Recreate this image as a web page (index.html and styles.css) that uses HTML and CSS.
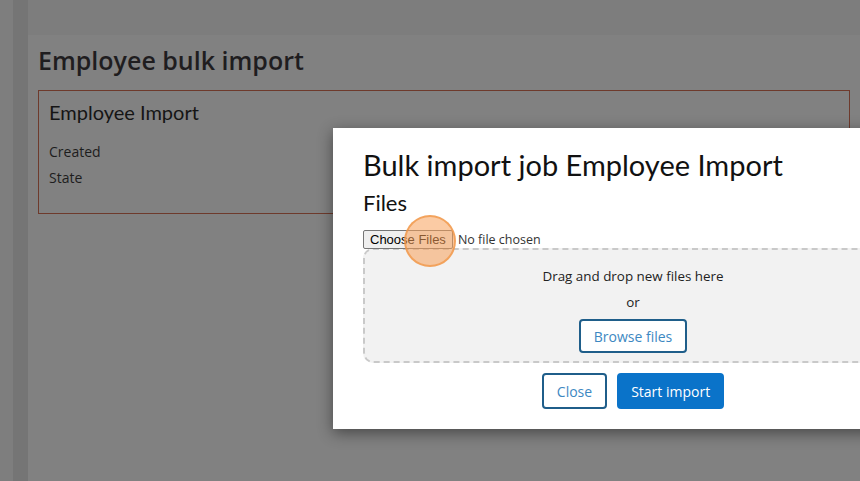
FILE: index.html
```html
<!DOCTYPE html>
<html lang="en">
<head>
<meta charset="utf-8">
<title>Employee bulk import</title>
<link rel="stylesheet" href="styles.css">
</head>
<body>
<div class="shell">
  <div class="rail-outer"></div>
  <div class="rail-inner"></div>
  <main class="content">
    <section class="panel">
      <h1 class="page-title">Employee bulk import</h1>
      <div class="job-card">
        <h2 class="job-title">Employee Import</h2>
        <div class="job-field">Created</div>
        <div class="job-field">State</div>
      </div>
    </section>
  </main>
</div>

<div class="modal">
  <h2 class="modal-title">Bulk import job Employee Import</h2>
  <h3 class="modal-sub">Files</h3>
  <div class="file-row">
    <span class="file-btn">Choose Files</span>
    <span class="file-none">No file chosen</span>
  </div>
  <div class="dropzone">
    <div class="dz-text">Drag and drop new files here</div>
    <div class="dz-or">or</div>
    <button class="btn btn-outline btn-browse">Browse files</button>
  </div>
  <div class="actions">
    <button class="btn btn-outline">Close</button>
    <button class="btn btn-primary">Start import</button>
  </div>
</div>
<div class="click-marker"></div>
</body>
</html>
```

FILE: styles.css
```css
html, body {
  margin: 0;
  padding: 0;
  height: 100%;
  overflow: hidden;
}
body {
  background: #7d7d7d;
  font-family: "Open Sans", "Liberation Sans", sans-serif;
  color: #1a1a1a;
}
.shell {
  display: flex;
  height: 100%;
}
.rail-outer {
  width: 13px;
  background: #7e7e7e;
}
.rail-inner {
  width: 15px;
  background: #757575;
}
.content {
  flex: 1;
  padding-top: 35px;
  display: flex;
  flex-direction: column;
}
.panel {
  flex: 1;
  background: #818181;
  padding: 9px 10px 0 10px;
}
.page-title {
  margin: 0 0 14px 0;
  font-size: 25px;
  font-weight: 600;
  line-height: 32px;
  color: #1f1d1f;
}
.job-card {
  border: 1px solid #6e3a2c;
  padding: 6px 10px 16px 10px;
  height: 100px;
}
.job-title {
  margin: 0 0 12px 0;
  font-family: Lato, "Open Sans", sans-serif;
  font-weight: 400;
  font-size: 20px;
  line-height: 30px;
  color: #151515;
}
.job-field {
  font-size: 14px;
  line-height: 26px;
  color: #1d1d1d;
}

.modal {
  position: absolute;
  left: 333px;
  top: 128px;
  width: 600px;
  box-sizing: border-box;
  background: #ffffff;
  padding: 19px 30px 20px 30px;
  box-shadow: 0 4px 14px rgba(0, 0, 0, 0.45);
}
.modal-title {
  margin: 0;
  font-family: Lato, "Open Sans", sans-serif;
  font-weight: 400;
  font-size: 29px;
  line-height: 36px;
  color: #111;
}
.modal-sub {
  margin: 6px 0 13px 0;
  font-family: Lato, "Open Sans", sans-serif;
  font-weight: 400;
  font-size: 22px;
  line-height: 28px;
  color: #111;
}
.file-row {
  display: flex;
  align-items: center;
  gap: 5px;
  height: 19px;
}
.file-btn {
  font-family: "Liberation Sans", Arial, sans-serif;
  font-size: 13px;
  line-height: 17px;
  padding: 0 6px;
  background: #efefef;
  border: 1px solid #767676;
  border-radius: 2px;
  color: #000;
}
.file-none {
  font-size: 12.5px;
  color: #333;
}
.dropzone {
  margin-top: -1px;
  border: 2px dashed #c9c9c9;
  border-radius: 10px;
  background: #f2f2f2;
  padding: 16px 0 8px 0;
  display: flex;
  flex-direction: column;
  align-items: center;
}
.dz-text {
  font-size: 13.4px;
  line-height: 20px;
  color: #222;
}
.dz-or {
  font-size: 13.4px;
  line-height: 20px;
  margin-top: 6px;
  color: #222;
}
.btn {
  font-family: "Open Sans", "Liberation Sans", sans-serif;
  font-size: 14px;
  border-radius: 4px;
  cursor: pointer;
}
.btn-outline {
  background: #fff;
  border: 2px solid #1f5e8a;
  color: #3d88c2;
  height: 36px;
  padding: 0 13px;
}
.btn-browse {
  margin-top: 7px;
  height: 34px;
  padding: 0 13px;
}
.btn-primary {
  background: #0a73c9;
  border: 2px solid #0a73c9;
  color: #fff;
  height: 36px;
  padding: 0 12px;
}
.actions {
  display: flex;
  justify-content: center;
  gap: 10px;
  margin-top: 10px;
}
.click-marker {
  position: absolute;
  left: 404px;
  top: 215px;
  width: 48px;
  height: 48px;
  border-radius: 50%;
  background: rgba(247, 160, 90, 0.55);
  border: 2px solid rgba(240, 150, 70, 0.75);
}
```
